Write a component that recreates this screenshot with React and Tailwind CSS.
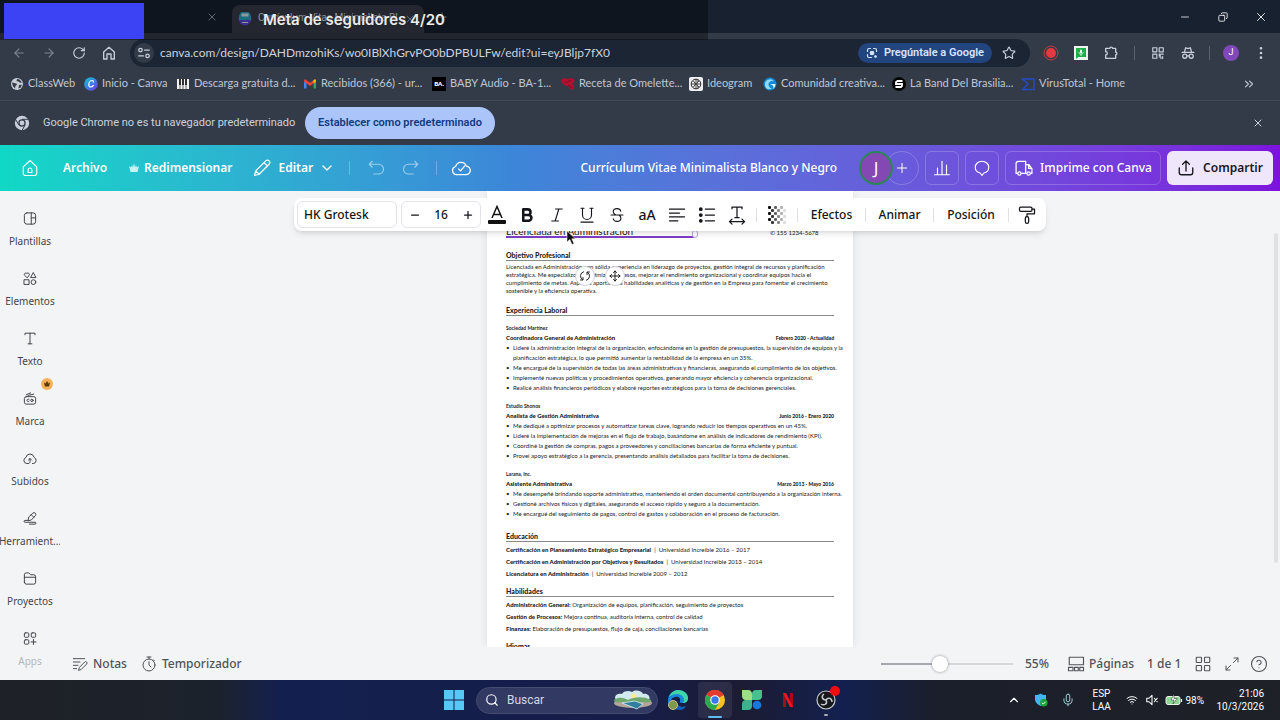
import {
  ArrowLeft,
  ArrowRight,
  ChevronDown,
  ChevronUp,
  ChevronsRight,
  CircleHelp,
  Copy,
  EllipsisVertical,
  Maximize2,
  Mic,
  Minus,
  Move,
  Plus,
  RotateCw,
  Search,
  Star,
  Wifi,
  X,
} from "lucide-react";

const uiFont = "font-['Roboto','Noto_Sans',sans-serif]";
const canvaFont = "font-['Noto_Sans','Open_Sans',sans-serif]";
const cvFont = "font-['Lato','Open_Sans',sans-serif]";

const Line = ({ children, className = "size-5", width = 1.5 }) => (
  <svg
    viewBox="0 0 24 24"
    fill="none"
    stroke="currentColor"
    strokeWidth={width}
    strokeLinecap="round"
    strokeLinejoin="round"
    className={className}
  >
    {children}
  </svg>
);

/* ── Bookmark favicons ── */
const GlobeIcon = () => (
  <svg viewBox="0 0 14 14" className="size-3.5">
    <circle cx="7" cy="7" r="6" fill="#c8cdd6" />
    <path d="M2 5.5c2 0 2.5 1 4 1s1 2-.5 2.2L5 11.5 2.8 9zM7 2l2.5.4L12 5.5l-2 .3-1.5-1.3L6.5 4zM9 8l3-.2-1.5 3-2 .8z" fill="#333b49" />
  </svg>
);

const CanvaIcon = () => (
  <svg viewBox="0 0 14 14" className="size-3.5">
    <defs>
      <linearGradient id="canva" x1="0" y1="0" x2="1" y2="1">
        <stop offset="0" stopColor="#0fc9cf" />
        <stop offset="0.55" stopColor="#3f7be0" />
        <stop offset="1" stopColor="#7d2ae8" />
      </linearGradient>
    </defs>
    <circle cx="7" cy="7" r="6.8" fill="url(#canva)" />
    <path d="M9.3 5.2c.3-1-.3-1.7-1.2-1.7-1.8 0-3.3 2-3.3 4 0 1.5.8 2.5 2 2.5 1 0 1.900-.6 2.500-1.600" fill="none" stroke="#fff" strokeWidth="1.2" strokeLinecap="round" />
  </svg>
);

const PianoIcon = () => (
  <svg viewBox="0 0 14 14" className="size-3.5">
    <path d="M1 2h12v10H1z" fill="#f2f2f2" />
    <path d="M4 2v10M7 2v10M10 2v10" stroke="#222" strokeWidth="0.7" />
    <path d="M3.2 2h1.6v6H3.2zM6.2 2h1.6v6H6.2zM9.2 2h1.6v6H9.2z" fill="#111" />
  </svg>
);

const GmailIcon = () => (
  <svg viewBox="0 0 14 14" className="size-3.5">
    <path d="M1 4v7.5h2.5V5.5z" fill="#4285f4" />
    <path d="M13 4v7.5h-2.5V5.5z" fill="#34a853" />
    <path d="M1 3.5C1 2.5 2 2 3 2.8l4 3 4-3c1-.8 2-.3 2 .7v1L7 9 1 4.5z" fill="#ea4335" />
    <path d="M10.5 3.2l.5-.4c1-.8 2-.3 2 .7v1l-2.5 1.9z" fill="#fbbc04" />
  </svg>
);

const BabyIcon = () => (
  <span className="flex size-3.5 items-center justify-center bg-black text-[6px] font-extrabold text-white">BA.</span>
);

const OmeletteIcon = () => (
  <svg viewBox="0 0 14 14" className="size-3.5">
    <path d="M0 3c1-2 4-2 6-1 2-1 5-1 7 0 1 2 0 4-2 4.5L13 9l-1 4-3-1-2-3-3-.5L1 6z" fill="#b3102f" />
    <path d="M4 6l6-3M7 8l4 3" stroke="#6d0d26" strokeWidth="0.8" />
  </svg>
);

const IdeogramIcon = () => (
  <svg viewBox="0 0 14 14" className="size-3.5">
    <rect width="14" height="14" rx="2" fill="#eee" />
    <circle cx="7" cy="7" r="4.8" fill="none" stroke="#222" strokeWidth="1" />
    <path d="M7 2.5v9M4.5 4l2 3-2 3M9.5 4l-2 3 2 3M3 7h8M8 4h2M8 10h2" fill="none" stroke="#222" strokeWidth="0.8" />
  </svg>
);

const SwirlIcon = () => (
  <svg viewBox="0 0 14 14" className="size-3.5">
    <circle cx="7" cy="7" r="6.5" fill="#1689d6" />
    <path d="M2 8a5 5 0 0 1 9-3.5C8 3 5 5 5.5 8s3 3.5 4 3C6 13.5 2 12 2 8z" fill="#8fdcf7" />
    <path d="M7 7h5.5c0 2-1 4-2.5 5 1-2 .5-4-3-5z" fill="#d7f2fc" />
  </svg>
);

const BandIcon = () => (
  <svg viewBox="0 0 14 14" className="size-3.5">
    <circle cx="7" cy="7" r="7" fill="#050505" />
    <path d="M10.5 4H5.5L4 5.2V7h6v2L9 10H3.5" fill="none" stroke="#fff" strokeWidth="1.8" />
  </svg>
);

const VirusIcon = () => (
  <svg viewBox="0 0 14 14" className="size-3.5">
    <path d="M1.5 2h11.5v10.5H1.5L7 7z" fill="none" stroke="#2749c4" strokeWidth="1.5" />
  </svg>
);

const bookmarks = [
  { label: "ClassWeb", icon: GlobeIcon, width: "w-[74px]" },
  { label: "Inicio - Canva", icon: CanvaIcon, width: "w-[92px]" },
  { label: "Descarga gratuita d...", icon: PianoIcon, width: "w-[127px]" },
  { label: "Recibidos (366) - ur...", icon: GmailIcon, width: "w-[129px]" },
  { label: "BABY Audio - BA-1...", icon: BabyIcon, width: "w-[129px]" },
  { label: "Receta de Omelette...", icon: OmeletteIcon, width: "w-[128px]" },
  { label: "Ideogram", icon: IdeogramIcon, width: "w-[74px]" },
  { label: "Comunidad creativa...", icon: SwirlIcon, width: "w-[129px]" },
  { label: "La Band Del Brasilia...", icon: BandIcon, width: "w-[129px]" },
  { label: "VirusTotal - Home", icon: VirusIcon, width: "w-[120px]" },
];

/* ── Browser chrome ── */
const TabStrip = () => (
  <div className="flex h-[33px] items-end bg-[#182130] text-[#c3cad6]">
    <div className="flex h-full w-[232px] items-center justify-end pr-3">
      <button aria-label="Cerrar pestaña" className="flex size-4 items-center justify-center">
        <X className="size-3" strokeWidth={1.5} />
      </button>
    </div>
    <div className="flex h-7 w-[192px] items-center rounded-t-lg bg-[#383c49] px-1.5">
      <svg viewBox="0 0 14 14" className="size-3.5">
        <circle cx="7" cy="7" r="6.5" fill="#5a49d6" />
        <path d="M1 5a6 6 0 0 1 12 0v3H1z" fill="#28a9c8" />
        <rect x="3.5" y="1.5" width="7" height="3" fill="#e3e9f3" />
        <rect x="4" y="10" width="6" height="1" fill="#e3e9f3" />
      </svg>
      <span className="mb-1 ml-1.5 w-[140px] text-[10px] whitespace-nowrap text-[#dde1e9]">Currículum Vitae Minimalista Bl</span>
      <button aria-label="Cerrar pestaña activa" className="ml-1.5">
        <X className="size-3" strokeWidth={1.5} />
      </button>
    </div>
    <button aria-label="Nueva pestaña" className="flex h-full w-9 items-center justify-center">
      <Plus className="size-3.5" strokeWidth={1.5} />
    </button>
    <div className="ml-auto flex h-full items-center text-white">
      <button aria-label="Minimizar" className="flex w-[38px] justify-center">
        <Minus className="size-3" strokeWidth={1.5} />
      </button>
      <button aria-label="Restaurar" className="flex w-[38px] justify-center">
        <Copy className="size-2.5 -scale-x-100" strokeWidth={2} />
      </button>
      <button aria-label="Cerrar" className="flex w-[38px] justify-center">
        <X className="size-3.5" strokeWidth={1.5} />
      </button>
    </div>
  </div>
);

const AddressRow = () => (
  <div className="flex h-10 items-center bg-[#333b49] pl-1 text-[#c8cedb]">
    <button aria-label="Atrás" className="flex w-[30px] justify-center text-[#7b8391]">
      <ArrowLeft className="size-3.5" />
    </button>
    <button aria-label="Adelante" className="flex w-[30px] justify-center text-[#7b8391]">
      <ArrowRight className="size-3.5" />
    </button>
    <button aria-label="Recargar" className="flex w-[30px] justify-center">
      <RotateCw className="size-3.5" />
    </button>
    <button aria-label="Inicio" className="flex w-[30px] justify-center">
      <Line className="size-4" width={2}>
        <path d="M4 10.5 12 3.5l8 7V21h-5v-7.5H9V21H4z" />
      </Line>
    </button>
    <div className="ml-1.5 flex h-7 flex-1 items-center rounded-full bg-[#1c2533] pr-2.5 pl-1">
      <button aria-label="Información del sitio" className="flex size-5 items-center justify-center rounded-full bg-[#333b49]">
        <Line className="size-3.5" width={2.2}>
          <circle cx="6" cy="7" r="3" />
          <path d="M13 7h8M3 17h8" />
          <circle cx="18" cy="17" r="3" />
        </Line>
      </button>
      <input
        aria-label="Dirección"
        defaultValue="canva.com/design/DAHDmzohiKs/wo0IBlXhGrvPO0bDPBULFw/edit?ui=eyJBljp7fX0"
        className="ml-1.5 min-w-0 flex-1 bg-transparent font-['Lato',sans-serif] text-[12px] text-[#ccd2de] outline-none"
      />
      <button className="flex h-5 items-center gap-1.5 rounded-full bg-[#23457f] px-2 text-[11px] font-semibold text-[#d6e4ff]">
        <Line className="size-3" width={2.4}>
          <path d="M3 9V6a3 3 0 0 1 3-3h3M21 9V6a3 3 0 0 0-3-3h-3M3 15v3a3 3 0 0 0 3 3h5" />
          <circle cx="12" cy="12" r="3.5" fill="currentColor" />
          <circle cx="19" cy="19" r="1.5" fill="currentColor" />
        </Line>
        Pregúntale a Google
      </button>
      <button aria-label="Añadir a marcadores" className="mr-1 ml-2.5">
        <Star className="size-3.5" />
      </button>
    </div>
    <div className="flex items-center pl-1.5">
      <button aria-label="Grabar" className="flex w-[30px] justify-center">
        <svg viewBox="0 0 16 16" className="size-4">
          <circle cx="8" cy="8" r="7" fill="none" stroke="#c93a44" strokeWidth="1" />
          <circle cx="8" cy="8" r="5" fill="#e5383f" />
        </svg>
      </button>
      <button aria-label="Dictado" className="flex w-[30px] justify-center">
        <svg viewBox="0 0 14 14" className="size-3.5">
          <rect width="14" height="14" fill="#eef5ee" />
          <path d="M2 2h10v9H4.5L2 13z" fill="#1fae4d" />
          <rect x="6" y="3.5" width="2" height="4" rx="1" fill="#fff" />
          <path d="M4.8 6c0 3 4.4 3 4.4 0M7 8.2V10" fill="none" stroke="#fff" strokeWidth="0.7" />
        </svg>
      </button>
      <button aria-label="Extensiones" className="flex w-[30px] justify-center">
        <Line className="size-4" width={2}>
          <path d="M4 5h6a2.3 2.3 0 0 1 4.5 0H19v5.5a2.3 2.3 0 0 1 0 4.500v5H4v-5a2.500 2.500 0 0 0 0-5z" />
        </Line>
      </button>
      <span className="mx-2 h-3.5 w-px bg-[#5a6271]" />
      <button aria-label="Código QR" className="flex w-[30px] justify-center">
        <Line className="size-3.5" width={2}>
          <path d="M3 3h7v7H3zM14 3h7v7h-7zM3 14h7v7H3zM14 14h2v2h-2zM18 14h3M14 18.5h3v3M20 18v3.5" />
        </Line>
      </button>
      <button aria-label="Incógnito" className="flex w-[30px] justify-center">
        <Line className="size-3.5" width={2.2}>
          <path d="M2 11h20M6 10l2-7 4 1.5L16 3l2 7" />
          <circle cx="6.5" cy="17.5" r="3.5" />
          <circle cx="17.5" cy="17.5" r="3.5" />
          <path d="M10 17h4" />
        </Line>
      </button>
      <span className="mx-1.5 h-3.5 w-px bg-[#5a6271]" />
      <button aria-label="Perfil" className="flex w-[30px] justify-center">
        <span className="flex size-4 items-center justify-center rounded-full bg-[#8048b8] text-[9px] text-white">J</span>
      </button>
      <button aria-label="Más opciones" className="flex w-[30px] justify-center">
        <EllipsisVertical className="size-4" />
      </button>
      <span className="w-1" />
    </div>
  </div>
);

const BookmarksBar = () => (
  <nav className="flex h-[28px] items-center border-b border-[#434b59] bg-[#333b49] pb-1.5 pl-2.5 font-['Lato',sans-serif] text-[11px] text-[#c0c7d3]">
    {bookmarks.map(({ label, icon: Icon, width }) => (
      <a key={label} href="#" className={`flex shrink-0 items-center gap-1 whitespace-nowrap ${width}`}>
        <Icon />
        {label}
      </a>
    ))}
    <button aria-label="Más marcadores" className="mr-6 ml-auto">
      <ChevronsRight className="size-3.5" />
    </button>
  </nav>
);

const InfoBar = () => (
  <div className="flex h-11 items-center bg-[#333b49] pl-3.5 text-[11px] text-[#ccd2de]">
    <svg viewBox="0 0 16 16" className="size-4">
      <circle cx="8" cy="8" r="7.2" fill="#c8ceda" />
      <circle cx="8" cy="8" r="3.7" fill="#333b49" />
      <circle cx="8" cy="8" r="2.4" fill="#c8ceda" />
      <path d="M8 4.3h6.5M4.8 9.9 1.5 4.3M11.2 9.9 8 15.5" stroke="#333b49" strokeWidth="1" />
    </svg>
    <span className="ml-[13px] w-[252px] whitespace-nowrap">Google Chrome no es tu navegador predeterminado</span>
    <button className="ml-2.5 h-8 w-[190px] rounded-full bg-[#abc5fb] font-semibold whitespace-nowrap text-[#123a80]">
      Establecer como predeterminado
    </button>
    <button aria-label="Cerrar aviso" className="mr-4 ml-auto">
      <X className="size-3" strokeWidth={2} />
    </button>
  </div>
);

/* ── Canva header ── */
const EditorHeader = () => (
  <header className={`flex h-[46px] items-center bg-linear-to-r from-[#10d8c6] via-[#3c86d8] via-40% to-[#7c12dc] pr-[7px] text-[12px] font-medium text-white ${canvaFont}`}>
    <button aria-label="Inicio de Canva" className="flex w-[60px] justify-center">
      <Line className="size-[18px]">
        <path d="M3 10.5 12 2l9 8.5V19a3 3 0 0 1-3 3H6a3 3 0 0 1-3-3z" />
        <path d="M9.5 18v-3.5a2.5 2.5 0 0 1 5 0V18z" />
      </Line>
    </button>
    <button className="w-[50px] font-semibold">Archivo</button>
    <button className="ml-[18px] flex items-center gap-1 font-semibold whitespace-nowrap">
      <svg viewBox="0 0 12 10" className="h-2.5 w-3 text-[#c9f2f7]">
        <path d="M1 3l2 1.5L4 2l1 2.5L6 0l1 4.5L8 2l1 2.5L11 3 9.5 9h-7z" fill="currentColor" />
      </svg>
      Redimensionar
    </button>
    <button className="ml-5 flex items-center font-semibold whitespace-nowrap">
      <Line className="mr-1.5 size-5">
        <path d="M3 21l1.5-5.5L16.5 3.5a2.8 2.8 0 0 1 4 4L8.5 19.5zM14.5 5.5l4 4M4.5 15.5l4 4" />
      </Line>
      Editar
      <ChevronDown className="ml-1.5 size-4" strokeWidth={2} />
    </button>
    <span className="mr-2 ml-3.5 h-3.5 w-px bg-white/25" />
    <button aria-label="Deshacer" className="flex w-[35px] justify-center text-white/50">
      <Line className="size-[18px]">
        <path d="M7 3 3 7l4 4M3 7h12.5a5.5 5.5 0 0 1 0 13H9" />
      </Line>
    </button>
    <button aria-label="Rehacer" className="flex w-[35px] justify-center text-white/50">
      <Line className="size-[18px]">
        <path d="M17 3l4 4-4 4M21 7H8.5a5.5 5.5 0 0 0 0 13H15" />
      </Line>
    </button>
    <span className="ml-2 h-3.5 w-px bg-white/25" />
    <button aria-label="Guardado" className="ml-3.5">
      <Line className="size-5">
        <path d="M6.5 20A5 5 0 0 1 5.5 10.2a6.8 6.8 0 0 1 13-.4A5 5 0 0 1 17.5 20zM9 13l2.5 2.5 5-6" />
      </Line>
    </button>
    <h1 className="ml-auto whitespace-nowrap">Currículum Vitae Minimalista Blanco y Negro</h1>
    <div className="ml-[22px] flex items-center">
      <span className="z-10 flex size-[34px] items-center justify-center rounded-full border-2 border-[#2c8554] bg-[#8348b4] text-[17px] font-normal">J</span>
      <button aria-label="Invitar" className="-ml-2 flex size-[34px] items-center justify-center rounded-full border border-white/20">
        <Plus className="size-4" strokeWidth={1.5} />
      </button>
    </div>
    <button aria-label="Estadísticas" className="ml-1.5 flex size-[34px] items-center justify-center rounded-md border border-white/20">
      <Line className="size-[18px]">
        <path d="M2 21h20M6 20v-8M12 20V3M18 20V8" />
      </Line>
    </button>
    <button aria-label="Comentarios" className="ml-1.5 flex size-[34px] items-center justify-center rounded-md border border-white/20">
      <Line className="size-[18px]">
        <path d="M12 3c5 0 9 3.5 9 8 0 3.8-2.8 6.8-6.5 7.7L12 22l-2.5-3.3C5.8 17.8 3 14.8 3 11c0-4.5 4-8 9-8z" />
      </Line>
    </button>
    <button className="ml-1.5 flex h-[34px] w-[156px] items-center justify-center gap-1.5 rounded-md border border-white/20 whitespace-nowrap">
      <Line className="size-5">
        <path d="M4 18.5H2.5V7a3 3 0 0 1 3-3H14v14.5H9M14 8h4l3.5 5v5.5H20M17.5 8v4.5h4M14 18.5h1" />
        <circle cx="6.5" cy="18.5" r="2" />
        <circle cx="17.5" cy="18.5" r="2" />
      </Line>
      Imprime con Canva
    </button>
    <button className="ml-1.5 flex h-[34px] w-[106px] items-center justify-center gap-2 rounded-md bg-[#f0e6fc] font-semibold text-[#17181c]">
      <Line className="size-[18px]" width={1.8}>
        <path d="M3 12v6a3 3 0 0 0 3 3h12a3 3 0 0 0 3-3v-6M12 16V3M7.5 7 12 2.5 16.5 7" />
      </Line>
      Compartir
    </button>
  </header>
);

/* ── Side navigation ── */
const sideItems = [
  { label: "Plantillas", icon: <><rect x="3" y="3" width="18" height="18" rx="4" /><path d="M14 3v18M14 11h7" /></> },
  {
    label: "Elementos",
    icon: (
      <>
        <path d="M7 10.5 3.5 7a2.2 2.2 0 0 1 3.5-3 2.2 2.2 0 0 1 3.5 3zM17.5 3l4 7.5h-8zM3 14h7.5v7.5H3z" />
        <circle cx="17.5" cy="17.8" r="3.8" />
      </>
    ),
  },
  { label: "Texto", icon: <path d="M4 6V3.5h16V6M12 3.5v17M9 20.5h6" /> },
  {
    label: "Marca",
    crown: true,
    icon: (
      <>
        <rect x="3" y="9" width="18" height="12" rx="3" />
        <path d="M6 6l7-3M9 7l9-2M10.5 13.5a2 2 0 1 0 0 3" />
        <circle cx="15" cy="15" r="1.9" />
      </>
    ),
  },
  { label: "Subidos", icon: <path d="M9 20H7a5 5 0 0 1-1.5-9.7 6.600 6.600 0 0 1 13 0A5 5 0 0 1 17 20h-1M9.5 14.5 12 12l2.5 2.5M12 12v5c0 2-1 3-3 3" /> },
  { label: "Herramient...", icon: <path d="M9 15l1-5.500 6.500-6a2.500 2.500 0 0 1 4 4L14.500 14zM14 6l4 4M9 15H4a1.500 1.500 0 0 0 0 3h16a1.500 1.500 0 0 1 0 3h-9" /> },
  { label: "Proyectos", icon: <path d="M3 10h18M3 18V6a3 3 0 0 1 3-3h4l3 3h5a3 3 0 0 1 3 3v9a3 3 0 0 1-3 3H6a3 3 0 0 1-3-3z" /> },
  {
    label: "Apps",
    faded: true,
    icon: (
      <>
        <rect x="3" y="3" width="7" height="7" rx="1.5" />
        <rect x="14" y="3" width="7" height="7" rx="1.5" />
        <rect x="3" y="14" width="7" height="7" rx="1.5" />
        <path d="M17.5 13.5v8M13.5 17.5h8" />
      </>
    ),
  },
];

const SideNav = () => (
  <aside className={`flex w-[60px] shrink-0 flex-col overflow-hidden text-[10px] text-[#43464c] ${canvaFont}`}>
    {sideItems.map(({ label, icon, crown, faded }) => (
      <button key={label} className="relative flex h-[60px] shrink-0 flex-col items-center gap-[5px] pt-5">
        <Line className="size-5" width={1.6}>
          {icon}
        </Line>
        <span className={faded ? "leading-5 text-[#b4b7bc]" : "leading-5"}>{label}</span>
        {crown && (
          <span className="absolute top-[7px] right-[7px] flex size-3 items-center justify-center rounded-full bg-[#f5b158]">
            <svg viewBox="0 0 12 10" className="h-1.5 w-2">
              <path d="M1 2l2.5 2L6 0l2.5 4L11 2 9.5 9h-7z" fill="#5c3a0a" />
            </svg>
          </span>
        )}
      </button>
    ))}
  </aside>
);

/* ── Text toolbar ── */
const Divider = () => <span className="h-3.5 w-px bg-[#dfe1e5]" />;

const TransparencyIcon = () => {
  const cells = [];
  for (let row = 0; row < 6; row++) {
    for (let col = 0; col < 6; col++) {
      if ((row + col) % 2 === 0) cells.push({ row, col });
    }
  }
  return (
    <svg viewBox="0 0 18 18" className="size-[18px]">
      {cells.map(({ row, col }) => (
        <rect key={`${row}-${col}`} x={col * 3} y={row * 3} width="3" height="3" rx="1" fill="#111" opacity={1 - col * 0.17} />
      ))}
    </svg>
  );
};

const textTools = [
  {
    label: "Color de texto",
    body: (
      <svg viewBox="0 0 20 20" className="size-5">
        <path d="M5 13 10 1.5 15 13M6.8 9.5h6.4" fill="none" stroke="#111" strokeWidth="1.5" />
        <rect x="1" y="15" width="18" height="4" rx="1" fill="#111" />
      </svg>
    ),
  },
  { label: "Negrita", body: <Line className="size-[18px]" width={3.4}><path d="M7 4.5h6a3.7 3.7 0 0 1 0 7.4H7zM7 11.9h7a3.9 3.9 0 0 1 0 7.8H7z" /></Line> },
  { label: "Cursiva", body: <Line className="size-[18px]"><path d="M10 4h9M5 20h9M14.5 4l-5 16" /></Line> },
  { label: "Subrayado", body: <Line className="size-[18px]"><path d="M4 3h4M16 3h4M6 3v9a6 6 0 0 0 12 0V3M4 21.5h16" /></Line> },
  { label: "Tachado", body: <Line className="size-[18px]"><path d="M17 7c-.5-2.5-2.3-3.5-5-3.5S7 5 7 7.500c0 2 1.500 3.200 3.500 4.500M4 12h16M7 17c.5 2.500 2.500 3.500 5 3.500 2.800 0 5.200-1.500 5.200-4.200 0-2-1-3.300-2.700-4.300" /></Line> },
  { label: "Mayúsculas", body: <span className="text-[14px]">aA</span> },
  { label: "Alineación", body: <Line><path d="M3 5h18M3 9.7h12M3 14.3h18M3 19h10" /></Line> },
  {
    label: "Lista",
    body: (
      <Line>
        <path d="M10 5h11M10 12h11M10 19h11" />
        <path d="M4.5 5h.1M4.5 12h.1M4.5 19h.1" strokeWidth="4.5" />
      </Line>
    ),
  },
  { label: "Espaciado", body: <Line><path d="M6 4.5V2.5h12v2M12 2.5V15M9.5 15h5M3 20h18M6 17l-3 3 3 3M18 17l3 3-3 3" /></Line> },
];

const TextToolbar = () => (
  <div className={`absolute top-[7px] left-1/2 z-20 flex h-[33px] w-[752px] -translate-x-1/2 items-center rounded-lg bg-white pl-[3px] text-[12px] font-medium text-[#14151a] shadow-md ${canvaFont}`}>
    <button className="h-[27px] w-[100px] rounded-md border border-[#e2e3e8] pl-1.5 text-left">HK Grotesk</button>
    <div className="mr-px ml-1 flex h-[27px] w-[80px] items-center rounded-md border border-[#e2e3e8]">
      <button aria-label="Reducir" className="flex w-[25px] justify-center">
        <Minus className="size-3" strokeWidth={2.5} />
      </button>
      <input aria-label="Tamaño de fuente" defaultValue="16" className="w-7 bg-transparent text-center outline-none" />
      <button aria-label="Aumentar" className="flex w-[25px] justify-center">
        <Plus className="size-3" strokeWidth={2.5} />
      </button>
    </div>
    {textTools.map(({ label, body }) => (
      <button key={label} aria-label={label} className="flex w-[30px] justify-center">
        {body}
      </button>
    ))}
    <span className="w-1" />
    <Divider />
    <button aria-label="Transparencia" className="flex w-10 justify-center">
      <TransparencyIcon />
    </button>
    <Divider />
    <button className="w-[67px]">Efectos</button>
    <Divider />
    <button className="w-[67px]">Animar</button>
    <Divider />
    <button className="w-[74px]">Posición</button>
    <Divider />
    <button aria-label="Copiar estilo" className="flex w-9 justify-center">
      <Line className="size-5">
        <rect x="3" y="2.5" width="15" height="5" rx="1.5" />
        <path d="M18 5h3v5.5h-9V14" />
        <rect x="10" y="14" width="4" height="8" rx="2" />
      </Line>
    </button>
  </div>
);

/* ── Document ── */
const jobs = [
  {
    company: "Sociedad Martínez",
    role: "Coordinadora General de Administración",
    dates: "Febrero 2020 - Actualidad",
    points: [
      ["Lideré la administración integral de la organización, enfocándome en la gestión de presupuestos, la supervisión de equipos y la", "planificación estratégica, lo que permitió aumentar la rentabilidad de la empresa en un 35%."],
      ["Me encargué de la supervisión de todas las áreas administrativas y financieras, asegurando el cumplimiento de los objetivos."],
      ["Implementé nuevas políticas y procedimientos operativos, generando mayor eficiencia y coherencia organizacional."],
      ["Realicé análisis financieros periódicos y elaboré reportes estratégicos para la toma de decisiones gerenciales."],
    ],
  },
  {
    company: "Estudio Shonos",
    role: "Analista de Gestión Administrativa",
    dates: "Junio 2016 - Enero 2020",
    points: [
      ["Me dediqué a optimizar procesos y automatizar tareas clave, logrando reducir los tiempos operativos en un 45%."],
      ["Lideré la implementación de mejoras en el flujo de trabajo, basándome en análisis de indicadores de rendimiento (KPI)."],
      ["Coordiné la gestión de compras, pagos a proveedores y conciliaciones bancarias de forma eficiente y puntual."],
      ["Proveí apoyo estratégico a la gerencia, presentando análisis detallados para facilitar la toma de decisiones."],
    ],
  },
  {
    company: "Larana, Inc.",
    role: "Asistente Administrativa",
    dates: "Marzo 2013 - Mayo 2016",
    points: [
      ["Me desempeñé brindando soporte administrativo, manteniendo el orden documental contribuyendo a la organización interna."],
      ["Gestioné archivos físicos y digitales, asegurando el acceso rápido y seguro a la documentación."],
      ["Me encargué del seguimiento de pagos, control de gastos y colaboración en el proceso de facturación."],
    ],
  },
];

const education = [
  ["Certificación en Planeamiento Estratégico Empresarial", "Universidad Increíble 2016 – 2017"],
  ["Certificación en Administración por Objetivos y Resultados", "Universidad Increíble 2013 – 2014"],
  ["Licenciatura en Administración", "Universidad Increíble 2009 – 2012"],
];

const skills = [
  ["Administración General:", "Organización de equipos, planificación, seguimiento de proyectos"],
  ["Gestión de Procesos:", "Mejora continua, auditoría interna, control de calidad"],
  ["Finanzas:", "Elaboración de presupuestos, flujo de caja, conciliaciones bancarias"],
];

const Heading = ({ children }) => (
  <h2 className="border-b border-[#8a8a8a] text-[7px] leading-[10px] font-black">{children}</h2>
);

const Resume = () => (
  <article className={`relative mx-auto h-full w-[366px] overflow-hidden bg-white px-[19px] pt-8 text-[6px] whitespace-nowrap text-[#222] shadow-[0_0_8px_#d9dbe0] ${cvFont}`}>
    <div className="flex items-center justify-between">
      <div className="relative h-[15px] w-[188px] border-b-2 border-[#7c3fc4]">
        <p className="text-[10px] leading-[17px]">Licenciada en Administración</p>
        <span className="absolute -right-1 -bottom-0.5 h-2 w-1.5 rounded-sm border border-[#b9a3dc] bg-white" />
      </div>
      <p className="w-[64px] pt-1">✆ 155 1234-5678</p>
    </div>

    <div className="mt-3">
      <Heading>Objetivo Profesional</Heading>
      <p className="mt-0.5 leading-[8px]">
        Licenciada en Administración con sólida experiencia en liderazgo de proyectos, gestión integral de recursos y planificación
        <br />
        estratégica. Me especializo en optimizar procesos, mejorar el rendimiento organizacional y coordinar equipos hacia el
        <br />
        cumplimiento de metas. Aspiro a aportar mis habilidades analíticas y de gestión en la Empresa para fomentar el crecimiento
        <br />
        sostenible y la eficiencia operativa.
      </p>
    </div>

    <div className="mt-2.5">
      <Heading>Experiencia Laboral</Heading>
      <div className="mt-[7px] flex flex-col gap-2">
        {jobs.map((job) => (
          <section key={job.company}>
            <p className="text-[5px] leading-[10px] font-bold">{job.company}</p>
            <div className="flex items-center justify-between leading-[10px] font-black">
              <h3>{job.role}</h3>
              <span className="text-[5px]">{job.dates}</span>
            </div>
            <ul className="leading-[10px]">
              {job.points.map((lines) => (
                <li key={lines[0]} className="flex">
                  <span className="w-[7px] shrink-0">•</span>
                  <span>
                    {lines.map((line) => (
                      <span key={line} className="block">{line}</span>
                    ))}
                  </span>
                </li>
              ))}
            </ul>
          </section>
        ))}
      </div>
    </div>

    <div className="mt-3">
      <Heading>Educación</Heading>
      <div className="mt-0.5 leading-[12px]">
        {education.map(([title, place]) => (
          <p key={title}>
            <b className="font-black">{title}</b>&nbsp; | &nbsp;{place}
          </p>
        ))}
      </div>
    </div>

    <div className="mt-1.5">
      <Heading>Habilidades</Heading>
      <div className="mt-0.5 leading-[12px]">
        {skills.map(([title, text]) => (
          <p key={title}>
            <b className="font-black">{title}</b> {text}
          </p>
        ))}
      </div>
    </div>

    <div className="mt-1.5">
      <Heading>Idiomas</Heading>
    </div>

    <div className="absolute top-[75px] left-[88px] flex gap-2.5 text-[#222]">
      <button aria-label="Girar" className="flex size-5 items-center justify-center rounded-full border border-[#cfd1d6] bg-white">
        <Line className="size-3" width={2}>
          <path d="M9 3.5A9 9 0 0 0 7 19.5M3 20h5v-5M15 20.5A9 9 0 0 0 17 4.5M21 4h-5v5" />
        </Line>
      </button>
      <button aria-label="Mover" className="flex size-5 items-center justify-center rounded-full border border-[#cfd1d6] bg-white">
        <Move className="size-3" strokeWidth={2} />
      </button>
    </div>
    <svg viewBox="0 0 10 14" className="absolute top-10 left-[79px] h-3.5 w-2.5">
      <path d="M1 0v11l2.8-2.5L6 13.500l2-1-2.200-4.700H9.500z" fill="#111" stroke="#fff" strokeWidth="0.5" />
    </svg>
  </article>
);

const BottomBar = () => (
  <footer className={`flex h-[33px] shrink-0 items-center pr-3 pl-3 text-[12px] font-medium text-[#505359] ${canvaFont}`}>
    <button className="flex items-center gap-[5px]">
      <Line className="size-4">
        <path d="M2 4h17M2 9h10M2 14h7M2 19h5M10 21l1.2-4L19 9a2 2 0 0 1 3 3l-8 8z" />
      </Line>
      Notas
    </button>
    <button className="ml-3.5 flex items-center gap-[5px]">
      <Line className="size-4">
        <circle cx="12" cy="13.5" r="9" />
        <path d="M9 1.5h6M12 1.5v3M12 8.5v5l3 3M18.5 5.5 20 7" />
      </Line>
      Temporizador
    </button>
    <input
      type="range"
      aria-label="Zoom"
      defaultValue="44"
      className="ml-auto h-4 w-[132px] appearance-none bg-[linear-gradient(to_right,#a6a8b0_44%,#d5d7dc_44%)] bg-[length:100%_2px] bg-center bg-no-repeat [&::-webkit-slider-thumb]:size-4 [&::-webkit-slider-thumb]:appearance-none [&::-webkit-slider-thumb]:rounded-full [&::-webkit-slider-thumb]:bg-white [&::-webkit-slider-thumb]:shadow-[0_0_3px_#8a8d94]"
    />
    <span className="ml-3 w-[42px]">55%</span>
    <button className="flex w-[80px] items-center gap-1">
      <Line className="size-[18px]">
        <path d="M3 3h19v10H3zM2 16.5h6V21H2zM10 16.5h5V21h-5zM17 16.5h5V21h-5z" />
      </Line>
      Páginas
    </button>
    <span className="w-[41px]">1 de 1</span>
    <button aria-label="Cuadrícula" className="flex w-[30px] justify-center">
      <Line className="size-[18px]">
        <rect x="3" y="3" width="7" height="7" rx="1" />
        <rect x="14" y="3" width="7" height="7" rx="1" />
        <rect x="3" y="14" width="7" height="7" rx="1" />
        <rect x="14" y="14" width="7" height="7" rx="1" />
      </Line>
    </button>
    <button aria-label="Pantalla completa" className="flex w-7 justify-center">
      <Maximize2 className="size-4" strokeWidth={1.5} />
    </button>
    <button aria-label="Ayuda" className="ml-1">
      <CircleHelp className="size-[18px]" strokeWidth={1.5} />
    </button>
  </footer>
);

/* ── Windows taskbar ── */
const Taskbar = () => (
  <div className="grid h-10 shrink-0 grid-cols-[1fr_auto_1fr] items-center bg-[linear-gradient(to_right,#1e2127_0%,#1c222c_17%,#13204f_22%,#161d48_50%,#1c1c33_58%,#13204f_66%,#1b1f2b_73%,#1e2127_100%)] text-white">
    <span />
    <div className="flex items-center">
      <button aria-label="Inicio" className="mr-3">
        <svg viewBox="0 0 20 20" className="size-5">
          <path d="M0 0h9.5v9.5H0zM10.5 0H20v9.5h-9.5zM0 10.5h9.5V20H0zM10.5 10.5H20V20h-9.5z" fill="#55c8f5" />
        </svg>
      </button>
      <label className="flex h-[27px] w-[182px] items-center rounded-full border border-[#444b70] bg-[#323a63] pl-2">
        <Search className="size-3.5" />
        <input aria-label="Buscar" placeholder="Buscar" className="ml-2 w-[106px] bg-transparent text-[12px] outline-none placeholder:text-[#d3d7e3]" />
        <svg viewBox="0 0 40 20" className="h-5 w-10">
          <ellipse cx="20" cy="13" rx="19" ry="5" fill="#b3a59a" />
          <path d="M3 10C0 6 5 3 9 4c1-3 7-4 10-2 4-3 10-1 11 2 4-1 8 2 6 6z" fill="#d3eaf0" />
          <circle cx="21" cy="6" r="2.5" fill="#ffe993" />
          <path d="M1 10c5-4 11-2 14 0 6-3 15-4 23 0 1 2-4 3-8 2H8c-4 1-7 0-7-2z" fill="#6fa86d" />
          <path d="M9 13l13-2 8 3-6 5z" fill="#2f7f9d" stroke="#d6eef5" strokeWidth="0.8" />
        </svg>
      </label>
      <button aria-label="Edge" className="ml-2.5">
        <svg viewBox="0 0 20 20" className="size-5">
          <path d="M0 11C0 4 5 0 10 0s10 3 10 8c0 4-3 5-6 5-2 0-3-1-2-2 1-3-2-5-5-4-4 1-5 4-4 8 0 1 1 3 3 5-4-1-6-5-6-9z" fill="#1b86dd" />
          <path d="M1 7C3 2 7 0 10 0c6 0 10 4 10 8 0 3-2 5-5 5 3-3 0-9-6-9-4 0-7 2-8 3z" fill="#3fd6a4" />
          <path d="M3 10c-1 5 2 10 9 10 3 0 5-2 6-4-4 2-9 0-9-5z" fill="#1560b8" />
          <circle cx="5" cy="15" r="4.5" fill="#7b9a4c" stroke="#ccb78a" strokeWidth="1" />
        </svg>
      </button>
      <button aria-label="Chrome" className="relative ml-2.5 flex h-9 w-[34px] items-center justify-center rounded bg-white/8">
        <svg viewBox="0 0 20 20" className="size-5">
          <circle cx="10" cy="10" r="10" fill="#f9c31c" />
          <path d="M10 10 1.3 5A10 10 0 0 1 18.7 5z" fill="#e33b2e" />
          <path d="M10 10 1.3 5a10 10 0 0 0 8.7 15l4.3-7.5z" fill="#2da94f" />
          <circle cx="10" cy="10" r="4.8" fill="#fff" />
          <circle cx="10" cy="10" r="3.7" fill="#3a7ae8" />
        </svg>
        <span className="absolute bottom-0 h-0.5 w-3.5 rounded bg-[#63bdf2]" />
      </button>
      <button aria-label="Clover" className="ml-2.5">
        <svg viewBox="0 0 20 20" className="size-5">
          <path d="M0 0h6c3 0 4 2 4 4v6H4c-3 0-4-2-4-4z" fill="#9be084" />
          <path d="M20 0h-6c-3 0-4 2-4 4v6h6c3 0 4-2 4-4z" fill="#47c08e" />
          <path d="M0 20h6c3 0 4-2 4-4v-6H4c-3 0-4 2-4 4z" fill="#3db28d" />
          <circle cx="15" cy="15" r="4.3" fill="#1678dc" />
        </svg>
      </button>
      <button aria-label="Netflix" className="ml-3 flex w-7 justify-center">
        <svg viewBox="0 0 10 14" className="h-3.5 w-2.5">
          <path d="M0 0h3v14H0zM7 0h3v14H7z" fill="#a50c15" />
          <path d="M0 0h3l7 14H7z" fill="#ec1620" />
        </svg>
      </button>
      <button aria-label="OBS" className="relative ml-3.5">
        <svg viewBox="0 0 20 20" className="size-5">
          <circle cx="10" cy="10" r="9" fill="#17181b" stroke="#c9cbd1" strokeWidth="1.2" />
          <path d="M10 10c-4 0-5-4-2-6M10 10c2-3 6-2 6 2M10 10c2 4-2 6-5 4" fill="none" stroke="#c9cbd1" strokeWidth="1.5" />
        </svg>
        <span className="absolute -top-1 -right-1 size-2.5 rounded-full bg-[#f20d0d]" />
        <span className="absolute -bottom-1.5 left-2 h-0.5 w-1 rounded bg-[#a9adba]" />
      </button>
    </div>
    <div className="flex items-center justify-end pr-4 text-[10px] whitespace-nowrap">
      <button aria-label="Iconos ocultos" className="flex w-[27px] justify-center">
        <ChevronUp className="size-3.5" />
      </button>
      <span className="flex w-[27px] justify-center">
        <svg viewBox="0 0 14 14" className="size-3.5">
          <path d="M1 2c2 0 4-.5 5.500-1.500C8 1.500 10 2 12 2v4.500c0 3-2.500 5-5.500 6.500C3.500 11.500 1 9.500 1 6.500z" fill="#43b6ee" />
          <circle cx="9.8" cy="9.8" r="3.8" fill="#1ca33a" />
          <path d="M8 9.8l1.3 1.3 2.3-2.4" fill="none" stroke="#fff" strokeWidth="1" />
        </svg>
      </span>
      <span className="flex w-[27px] justify-center text-[#b5e4ea]">
        <Mic className="size-3.5" strokeWidth={1.5} />
      </span>
      <span className="w-10 text-center leading-[13px]">
        ESP
        <br />
        LAA
      </span>
      <span className="flex w-[22px] justify-center">
        <Wifi className="size-3" />
      </span>
      <span className="flex w-[18px] justify-center">
        <Line className="size-3.5" width={1.8}>
          <path d="M3 9h4l5-5v16l-5-5H3zM16 9l5 6M21 9l-5 6" />
        </Line>
      </span>
      <span className="ml-1 flex items-center gap-0.5">
        <svg viewBox="0 0 18 12" className="h-3 w-[18px]">
          <rect x="1" y="2.5" width="14" height="8" rx="2" fill="#8ed694" stroke="#e8f4e8" strokeWidth="1" />
          <path d="M16.5 5v3" stroke="#e8f4e8" strokeWidth="1.2" />
          <path d="M9 0 6 6h3L8 10l4-5.5H9z" fill="#fff" stroke="#1e2127" strokeWidth="0.5" />
        </svg>
        98%
      </span>
      <span className="w-[60px] text-right leading-[13px]">
        21:06
        <br />
        10/3/2026
      </span>
    </div>
  </div>
);

const App = () => (
  <div className={`flex h-screen flex-col overflow-hidden bg-[#f3f4f6] ${uiFont}`}>
    <div className="relative">
      <TabStrip />
      <div className="absolute top-0 left-0 z-10 flex h-10 w-[708px] items-center justify-center bg-black/35">
        <span className="absolute top-[3px] left-1 h-9 w-[140px] bg-[#3b43f5]" />
        <span className="font-['Inter',sans-serif] text-[15px] font-semibold text-[#ececec] [text-shadow:0_0_2px_#222]">Meta de seguidores 4/20</span>
      </div>
      <AddressRow />
      <BookmarksBar />
      <InfoBar />
    </div>
    <EditorHeader />
    <div className="flex min-h-0 flex-1">
      <SideNav />
      <div className="flex min-w-0 flex-1 flex-col">
        <main className="relative min-h-0 flex-1 overflow-hidden">
          <TextToolbar />
          <Resume />
          <span className="absolute right-0.5 bottom-[84px] h-[330px] w-1 rounded-full bg-[#dfe1e4]" />
        </main>
        <BottomBar />
      </div>
    </div>
    <Taskbar />
  </div>
);

export default App;
